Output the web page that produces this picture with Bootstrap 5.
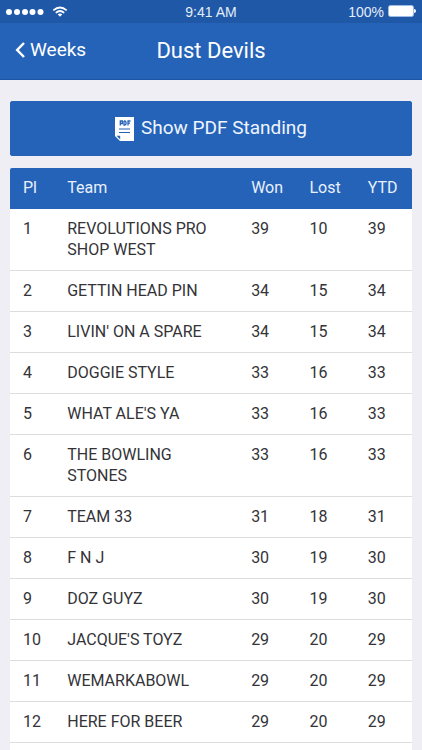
<!DOCTYPE html>
<html lang="en">
<head>
<meta charset="utf-8">
<meta name="viewport" content="width=device-width, initial-scale=1">
<title>Dust Devils</title>
<link href="https://cdn.jsdelivr.net/npm/bootstrap@5.3.0/dist/css/bootstrap.min.css" rel="stylesheet">
<style>
  :root { --brand: #2563b9; --brand-dark: #2058a8; --page: #efeef5; }
  body { font-family: Roboto, sans-serif; font-size: 16px; line-height: 21px; background: var(--page); color: #333338; }
  .screen { height: 100vh; }
  .status-strip { background: var(--brand-dark); height: 23px; padding: 2px 6px 0; font: 14px/21px "Liberation Sans", sans-serif; color: #e4edf9; }
  .title-strip { background: var(--brand); height: 57px; padding: 0 15px; border-bottom: 1px solid #1d55a6; }
  .side { flex: 1 1 0; }
  .back-link { font-size: 19px; gap: 5px; }
  .page-title { font-size: 22px; line-height: 28px; }
  .content-area { padding: 21px 10px 0; }
  .pdf-btn { --bs-btn-bg: var(--brand); --bs-btn-color: #eef5ff; --bs-btn-hover-bg: var(--brand-dark); --bs-btn-hover-color: #fff; --bs-btn-border-color: var(--brand); --bs-btn-border-radius: 2px; --bs-btn-padding-y: 0; height: 55px; font-size: 19px; gap: 7px; margin-bottom: 12px; }
  .standings { table-layout: fixed; border-radius: 2px 2px 0 0; overflow: hidden; --bs-table-bg: #fff; --bs-table-color: #333338; }
  .standings > :not(caption) > * > * { padding: 9px 13px 10px; border-bottom: 1px solid #dddde0; }
  .standings > thead > tr > th { background: var(--brand); color: #e8f1fd; font-weight: 400; border-bottom-color: var(--brand); }
  .standings th:nth-child(n+3), .standings td:nth-child(n+3) { padding: 9px 0 10px 12px; }
  .standings td:first-child { padding-right: 0; }
  .w-place { width: 11%; } .w-team { width: 46%; } .w-score { width: 14.5%; }
</style>
</head>
<body>
<div class="screen overflow-hidden">
  <header>
    <div class="status-strip d-flex align-items-center">
      <div class="side d-flex align-items-center gap-2">
        <svg width="38" height="8" viewBox="0 0 38 8" fill="#fff" aria-hidden="true"><circle cx="3" cy="3" r="3"/><circle cx="11" cy="3" r="3"/><circle cx="19" cy="3" r="3"/><circle cx="26.500" cy="3" r="3"/><circle cx="34.500" cy="3" r="3"/></svg>
        <svg width="16" height="13" viewBox="0 0 16 13" fill="none" stroke="#fff" stroke-width="1.700" aria-hidden="true"><path d="M1.300 4.300Q8-1.300 14.700 4.300M3.800 6.800Q8 3.200 12.200 6.800"/><path d="M5.700 8.200Q8 6.700 10.300 8.200L8 10.700z" fill="#fff" stroke="none"/></svg>
      </div>
      <span>9:41 AM</span>
      <div class="side d-flex align-items-center justify-content-end gap-1">
        <span>100%</span>
        <svg width="28" height="15" viewBox="0 0 28 15" aria-hidden="true"><rect x=".5" y=".5" width="25" height="11" rx="2" fill="#fff" stroke="#9fbce6"/><path d="M26 4q2 0 2 2t-2 2z" fill="#fff"/></svg>
      </div>
    </div>
    <nav class="title-strip d-flex align-items-center text-white">
      <div class="side"><a href="#" class="back-link d-inline-flex align-items-center text-white text-decoration-none">
        <svg width="10" height="17" viewBox="0 0 10 17" fill="none" stroke="#fff" stroke-width="2.500" aria-hidden="true"><path d="M9 2 2.200 9 9 16"/></svg>Weeks</a></div>
      <h1 class="page-title fw-normal mb-0">Dust Devils</h1>
      <div class="side"></div>
    </nav>
  </header>
  <main class="content-area">
    <button type="button" class="btn pdf-btn w-100 d-flex align-items-center justify-content-center">
      <svg width="19" height="24" viewBox="0 0 19 24" aria-hidden="true"><path d="M0 0H19V24H5L0 19z" fill="#fff"/><path d="M1.500 18.800H5.200V22.500z" fill="#2563b9"/><g stroke="#2563b9" fill="none"><path d="M4 12H15M4 15.500H15" stroke-width="1.200"/><path d="M5.300 8.500V4H7.400V6.500H5.300M9 4V8H10L11 7V5L10 4H9M13 8.500V4H15.500M13 6.200H15" stroke-width="1.300"/></g></svg>
      Show PDF Standing
    </button>
    <table class="table standings mb-0">
      <colgroup><col class="w-place"><col class="w-team"><col class="w-score"><col class="w-score"><col></colgroup>
      <thead><tr><th scope="col">Pl</th><th scope="col">Team</th><th scope="col">Won</th><th scope="col">Lost</th><th scope="col">YTD</th></tr></thead>
      <tbody>
        <tr><td>1</td><td>REVOLUTIONS PRO SHOP WEST</td><td>39</td><td>10</td><td>39</td></tr>
        <tr><td>2</td><td>GETTIN HEAD PIN</td><td>34</td><td>15</td><td>34</td></tr>
        <tr><td>3</td><td>LIVIN' ON A SPARE</td><td>34</td><td>15</td><td>34</td></tr>
        <tr><td>4</td><td>DOGGIE STYLE</td><td>33</td><td>16</td><td>33</td></tr>
        <tr><td>5</td><td>WHAT ALE'S YA</td><td>33</td><td>16</td><td>33</td></tr>
        <tr><td>6</td><td>THE BOWLING STONES</td><td>33</td><td>16</td><td>33</td></tr>
        <tr><td>7</td><td>TEAM 33</td><td>31</td><td>18</td><td>31</td></tr>
        <tr><td>8</td><td>F N J</td><td>30</td><td>19</td><td>30</td></tr>
        <tr><td>9</td><td>DOZ GUYZ</td><td>30</td><td>19</td><td>30</td></tr>
        <tr><td>10</td><td>JACQUE'S TOYZ</td><td>29</td><td>20</td><td>29</td></tr>
        <tr><td>11</td><td>WEMARKABOWL</td><td>29</td><td>20</td><td>29</td></tr>
        <tr><td>12</td><td>HERE FOR BEER</td><td>29</td><td>20</td><td>29</td></tr>
        <tr><td>&nbsp;</td><td></td><td></td><td></td><td></td></tr>
      </tbody>
    </table>
  </main>
</div>
<script src="https://cdn.jsdelivr.net/npm/bootstrap@5.3.0/dist/js/bootstrap.bundle.min.js"></script>
</body>
</html>
